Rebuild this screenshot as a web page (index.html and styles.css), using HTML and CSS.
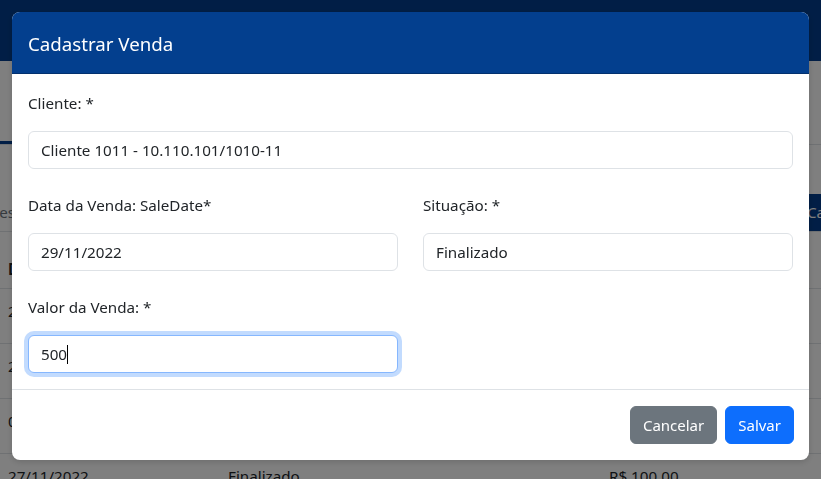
FILE: index.html
```html
<!DOCTYPE html>
<html lang="pt-BR">
<head>
<meta charset="utf-8">
<title>Cadastrar Venda</title>
<link rel="stylesheet" href="styles.css">
</head>
<body>
<div class="page">
  <header class="topbar"></header>
  <div class="tabs">
    <span class="tab active">Vendas</span>
  </div>
  <div class="toolbar">
    <div class="search">Pesquisar</div>
    <div class="new-btn">Cadastrar</div>
  </div>
  <table class="grid">
    <thead>
      <tr><th>Data</th><th>Situação</th><th>Valor</th></tr>
    </thead>
    <tbody>
      <tr><td>28/11/2022</td><td>Finalizado</td><td>R$ 200,00</td></tr>
      <tr><td>28/11/2022</td><td>Finalizado</td><td>R$ 150,00</td></tr>
      <tr><td>01/11/2022</td><td>Finalizado</td><td>R$ 300,00</td></tr>
      <tr><td>27/11/2022</td><td>Finalizado</td><td>R$ 100,00</td></tr>
    </tbody>
  </table>
</div>

<div class="backdrop"></div>

<div class="modal">
  <div class="modal-content">
    <div class="modal-header">
      <h5 class="modal-title">Cadastrar Venda</h5>
    </div>
    <div class="modal-body">
      <div class="group">
        <label class="label">Cliente: *</label>
        <div class="control">Cliente 1011 - 10.110.101/1010-11</div>
      </div>
      <div class="group row">
        <div class="col">
          <label class="label">Data da Venda: SaleDate*</label>
          <div class="control">29/11/2022</div>
        </div>
        <div class="col">
          <label class="label">Situação: *</label>
          <div class="control">Finalizado</div>
        </div>
      </div>
      <div class="group row">
        <div class="col">
          <label class="label">Valor da Venda: *</label>
          <div class="control focused">500<span class="caret"></span></div>
        </div>
        <div class="col"></div>
      </div>
    </div>
    <div class="modal-footer">
      <button class="btn btn-secondary">Cancelar</button>
      <button class="btn btn-primary">Salvar</button>
    </div>
  </div>
</div>
</body>
</html>
```

FILE: styles.css
```css
* { box-sizing: border-box; }

html, body {
  margin: 0;
  padding: 0;
  width: 821px;
  height: 479px;
  overflow: hidden;
}

body {
  font-family: "Segoe UI", "Noto Sans", "Open Sans", sans-serif;
  font-size: 15.2px;
  line-height: 24px;
  color: #212529;
  background: #ffffff;
}

/* ---------- background page ---------- */
.page {
  width: 821px;
  height: 479px;
  overflow: hidden;
}

.topbar {
  height: 61px;
  background: #033d8c;
}

.tabs {
  height: 84px;
  display: flex;
  align-items: flex-end;
  border-bottom: 1px solid #dee2e6;
}

.tab {
  padding: 8px 16px;
  color: #033d8c;
}

.tab.active {
  border-bottom: 3px solid #033d8c;
}

.toolbar {
  margin-top: 49px;
  height: 38px;
  display: flex;
  justify-content: space-between;
  border-bottom: 1px solid #dee2e6;
}

.search {
  padding: 6px 12px 6px 0;
  margin-left: -10px;
  color: #6c757d;
}

.new-btn {
  padding: 6px 12px 6px 0;
  background: #033d8c;
  color: #ffffff;
  width: 100px;
  margin-right: -86px;
}

.grid {
  width: 821px;
  border-collapse: collapse;
}

.grid th,
.grid td {
  text-align: left;
  padding: 10px 8px 20px;
  border-bottom: 1px solid #dee2e6;
  font-weight: normal;
  line-height: 24px;
}

.grid th {
  font-weight: 700;
  padding: 25px 8px 7px;
}

.grid th:nth-child(1), .grid td:nth-child(1) { width: 220px; }
.grid th:nth-child(2), .grid td:nth-child(2) { width: 381px; }

/* ---------- overlay ---------- */
.backdrop {
  position: fixed;
  inset: 0;
  background: rgba(0, 0, 0, 0.5);
}

.modal {
  position: fixed;
  top: 12px;
  left: 12px;
  width: 797px;
}

.modal-content {
  background: #ffffff;
  border-radius: 8px;
  overflow: hidden;
  box-shadow: 0 2px 6px rgba(0, 0, 0, 0.15);
}

.modal-header {
  background: #033f8e;
  padding: 17px 16px 15px;
  border-bottom: 1px solid #02306e;
}

.modal-title {
  margin: 0;
  font-size: 18.7px;
  font-weight: 400;
  line-height: 29px;
  color: #ffffff;
}

.modal-body {
  padding: 17px 16px 16px;
  display: flex;
  flex-direction: column;
  gap: 24px;
}

.group.row {
  display: grid;
  grid-template-columns: 1fr 1fr;
  column-gap: 25px;
}

.label {
  display: block;
  line-height: 24px;
  margin-bottom: 16px;
}

.control {
  height: 38px;
  padding: 6px 12px;
  border: 1px solid #dee2e6;
  border-radius: 6px;
  line-height: 24px;
  color: #212529;
  background: #ffffff;
  white-space: nowrap;
}

.control.focused {
  border-color: #86b7fe;
  box-shadow: 0 0 0 4px rgba(13, 110, 253, 0.25);
}

.caret {
  display: inline-block;
  width: 1px;
  height: 19px;
  background: #000000;
  vertical-align: -4px;
}

.modal-footer {
  border-top: 1px solid #dee2e6;
  padding: 16px 15px 16px;
  display: flex;
  justify-content: flex-end;
  gap: 8px;
}

.btn {
  font-family: inherit;
  font-size: 15px;
  line-height: 24px;
  height: 38px;
  padding: 6px 12px;
  border: 1px solid transparent;
  border-radius: 6px;
  color: #ffffff;
}

.btn-secondary {
  background: #6c757d;
  border-color: #6c757d;
}

.btn-primary {
  background: #0d6efd;
  border-color: #0d6efd;
}
```
